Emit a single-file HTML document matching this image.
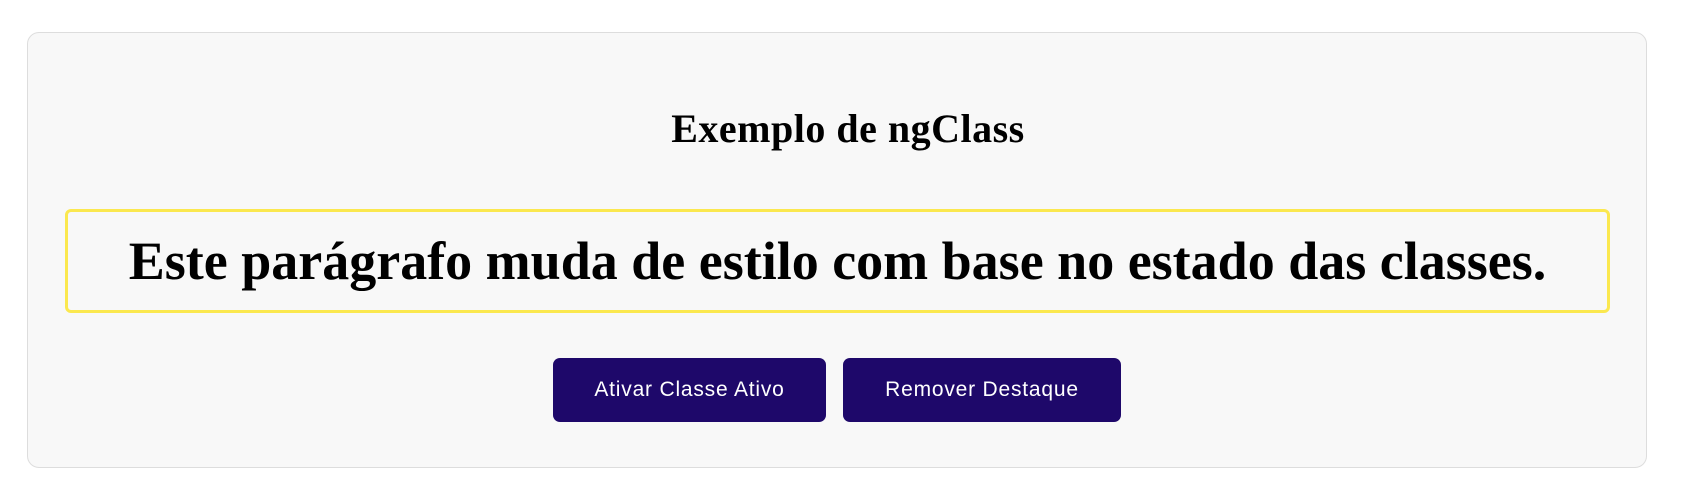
<!DOCTYPE html>
<html><head><style>
body{margin:0;background:#fff;width:1696px;height:500px;position:relative;font-family:"Liberation Serif",serif}
.card{position:absolute;left:27px;top:32px;width:1620px;height:436px;background:#f8f8f8;border:1px solid #ddd;border-radius:12px;box-sizing:border-box}
h2{position:absolute;left:0;right:0;top:103px;margin:0;text-align:center;font-size:40px;letter-spacing:0.5px;font-weight:bold;line-height:52px;padding-left:0}
.box{position:absolute;left:65px;top:209px;width:1545px;height:104px;border:3px solid #fbe84f;border-radius:6px;box-sizing:border-box;text-align:center;font-weight:bold;font-size:54px;letter-spacing:0px;line-height:98px}
.btn{position:absolute;top:358px;height:64px;background:#1e086a;color:#fff;border-radius:7px;font-family:"Liberation Sans",sans-serif;font-size:21px;letter-spacing:0.8px;line-height:64px;text-align:center}
</style></head><body>
<div class="card"></div>
<h2>Exemplo de ngClass</h2>
<div class="box">Este parágrafo muda de estilo com base no estado das classes.</div>
<div class="btn" style="left:553px;width:273px">Ativar Classe Ativo</div>
<div class="btn" style="left:843px;width:278px">Remover Destaque</div>
</body></html>
